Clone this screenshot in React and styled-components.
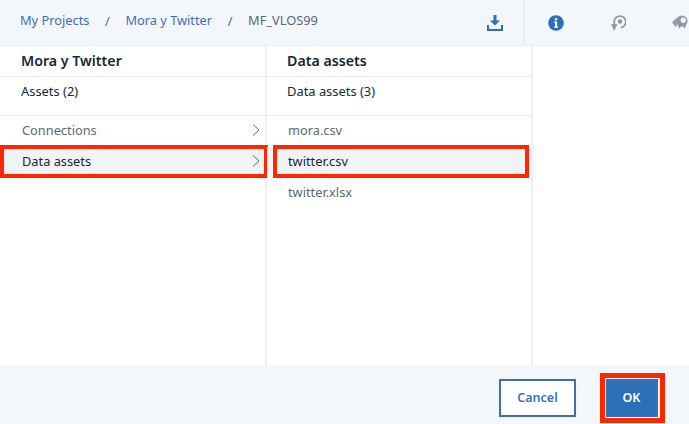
import styled, { createGlobalStyle } from 'styled-components';

const GlobalStyle = createGlobalStyle`
  html, body { margin: 0; padding: 0; background: #fff; }
  body { font-family: "Noto Sans", "Liberation Sans", sans-serif; }
`;

const Page = styled.div`
  width: 689px;
  height: 424px;
  display: flex;
  flex-direction: column;
  overflow: hidden;
`;

const Header = styled.header`
  height: 46px;
  flex: none;
  display: flex;
  align-items: stretch;
  background: #f3f6fb;
  border-bottom: 1px solid #e9ecf1;
  box-sizing: border-box;
`;

const Crumbs = styled.nav`
  width: 464px;
  flex: none;
  display: flex;
  align-items: center;
  padding: 0 0 5px 20px;
  box-sizing: border-box;
  font-size: 12.8px;
`;

const Crumb = styled.span`
  color: ${(p) => (p.$current ? '#5a6872' : '#3d70b2')};
`;

const Slash = styled.span`
  color: #5a6872;
  width: 36px;
  text-align: center;
  padding-top: 2px;
`;

const IconBar = styled.div`
  flex: 1;
  display: flex;
  align-items: stretch;
  height: 45px;
`;

const DownloadSlot = styled.div`
  width: 61px;
  flex: none;
  display: flex;
  align-items: center;
  justify-content: center;
  border-right: 2px solid #e9ecf1;
  box-sizing: border-box;
  padding: 0 0 0 2px;
`;

const ToolSlot = styled.div`
  width: 62px;
  flex: none;
  display: flex;
  align-items: center;
  justify-content: center;
`;

const ClippedSlot = styled(ToolSlot)`
  width: 40px;
  justify-content: flex-start;
  padding-left: 23px;
  box-sizing: border-box;
  overflow: hidden;
`;

const Columns = styled.main`
  flex: 1;
  display: grid;
  grid-template-columns: 267px 266px 1fr;
  min-height: 0;
`;

const Column = styled.section`
  border-right: ${(p) => (p.$bare ? 'none' : '2px solid #eceff3')};
  box-sizing: border-box;
`;

const ColumnTitle = styled.h2`
  margin: 0;
  height: 31px;
  padding: 0 0 1px ${(p) => p.$indent}px;
  display: flex;
  align-items: center;
  font-size: 14.2px;
  font-weight: 600;
  color: #152935;
  border-bottom: 1px solid #e9ecf1;
  box-sizing: border-box;
`;

const ColumnCount = styled.div`
  height: 39px;
  padding: 0 0 10px ${(p) => p.$indent}px;
  display: flex;
  align-items: center;
  font-size: 12.9px;
  color: #152935;
  border-bottom: 1px solid #e9ecf1;
  box-sizing: border-box;
`;

const List = styled.ul`
  list-style: none;
  margin: 0;
  padding: 0;
`;

const Row = styled.li`
  position: relative;
  height: 31px;
  display: flex;
  align-items: center;
  justify-content: space-between;
  padding: 0 4px 4px ${(p) => p.$indent}px;
  font-size: 12.8px;
  color: ${(p) => (p.$selected ? '#152935' : '#5a6872')};
  background: ${(p) => (p.$selected ? '#f2f3f5' : 'transparent')};
  box-sizing: border-box;

  ${(p) =>
    p.$selected &&
    `&::after {
      content: '';
      position: absolute;
      top: -2px;
      bottom: 0;
      left: ${p.$boxLeft}px;
      right: ${p.$boxRight}px;
      border: 4px solid #ff2600;
    }`}
`;

const Footer = styled.footer`
  height: 59px;
  flex: none;
  background: #f3f6fb;
  display: flex;
  align-items: flex-start;
  justify-content: flex-end;
  gap: 29px;
  padding: 14px 31px 0 0;
  box-sizing: border-box;
`;

const Button = styled.button`
  height: 38px;
  font-family: inherit;
  font-size: 12.5px;
  font-weight: 600;
  box-sizing: border-box;
  border: 2px solid #3d70b2;
  padding: 0 0 2px;
`;

const CancelButton = styled(Button)`
  width: 77px;
  background: #fff;
  color: #3d70b2;
`;

const OkButton = styled(Button)`
  position: relative;
  width: 53px;
  background: #2d6fb7;
  color: #fff;

  &::after {
    content: '';
    position: absolute;
    top: -8px;
    bottom: -8px;
    left: -7px;
    right: -9px;
    border: 5px solid #ff2600;
    box-shadow: inset 0 0 0 1px #fff;
  }
`;

const Chevron = () => (
  <svg width="10" height="14" viewBox="0 0 10 14" fill="none" stroke="#5a6872" strokeWidth="1">
    <path d="M2 1.500l6 5.500-6 5.500" />
  </svg>
);

const DownloadIcon = () => (
  <svg width="16" height="16" viewBox="0 0 16 16" fill="#2d6fb7">
    <path d="M6.500 0h3v5.500H13L8 10.500 3 5.500h3.500z" />
    <path d="M0 10h2v4h12v-4h2v6H0z" />
  </svg>
);

const InfoIcon = () => (
  <svg width="16" height="16" viewBox="0 0 16 16">
    <circle cx="8" cy="8" r="7.800" fill="#2d6fb7" />
    <circle cx="8" cy="4.300" r="1.200" fill="#fff" />
    <path d="M6 6.600h3.100v5h1v1.200H6v-1.200h1.200V7.800H6z" fill="#fff" />
  </svg>
);

const RestoreIcon = () => (
  <svg width="15" height="16" viewBox="0 0 15 16" fill="none">
    <path d="M3.200 9V7a5.800 5.800 0 1 1 6.500 5.600" stroke="#8c9ba5" strokeWidth="1.800" />
    <circle cx="9" cy="6.500" r="2.300" fill="#8c9ba5" />
    <path d="M0 9h6.400L3.200 16z" fill="#8c9ba5" />
  </svg>
);

const CommentsIcon = () => (
  <svg width="18" height="15" viewBox="0 0 18 15" fill="#8c9ba5">
    <path d="M0 7.500L5 2.500V12H4z" />
    <circle cx="10.500" cy="6" r="6" />
    <path d="M6 10h4l-2 4.500zM11 10h4l-1.500 4z" />
    <circle cx="12" cy="5" r="2.800" fill="#f3f6fb" />
  </svg>
);

const leftRows = [
  { label: 'Connections' },
  { label: 'Data assets', selected: true },
];

const rightRows = [
  { label: 'mora.csv' },
  { label: 'twitter.csv', selected: true },
  { label: 'twitter.xlsx' },
];

const App = () => {
  return (
    <Page>
      <GlobalStyle />
      <Header>
        <Crumbs>
          <Crumb>My Projects</Crumb>
          <Slash>/</Slash>
          <Crumb>Mora y Twitter</Crumb>
          <Slash>/</Slash>
          <Crumb $current>MF_VLOS99</Crumb>
        </Crumbs>
        <IconBar>
          <DownloadSlot><DownloadIcon /></DownloadSlot>
          <ToolSlot><InfoIcon /></ToolSlot>
          <ToolSlot><RestoreIcon /></ToolSlot>
          <ClippedSlot><CommentsIcon /></ClippedSlot>
        </IconBar>
      </Header>
      <Columns>
        <Column>
          <ColumnTitle $indent={21}>Mora y Twitter</ColumnTitle>
          <ColumnCount $indent={21}>Assets (2)</ColumnCount>
          <List>
            {leftRows.map((row) => (
              <Row key={row.label} $indent={22} $selected={row.selected} $boxLeft={0} $boxRight={-3}>
                {row.label}
                <Chevron />
              </Row>
            ))}
          </List>
        </Column>
        <Column>
          <ColumnTitle $indent={20}>Data assets</ColumnTitle>
          <ColumnCount $indent={20}>Data assets (3)</ColumnCount>
          <List>
            {rightRows.map((row) => (
              <Row key={row.label} $indent={21} $selected={row.selected} $boxLeft={6} $boxRight={2}>
                {row.label}
              </Row>
            ))}
          </List>
        </Column>
        <Column $bare />
      </Columns>
      <Footer>
        <CancelButton>Cancel</CancelButton>
        <OkButton>OK</OkButton>
      </Footer>
    </Page>
  );
};

export default App;
